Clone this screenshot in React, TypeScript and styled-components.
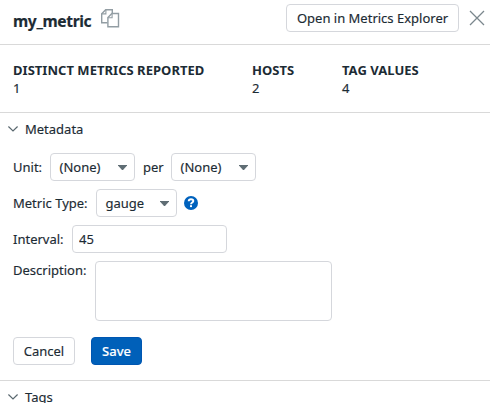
import React from 'react';
import styled, { createGlobalStyle, css } from 'styled-components';

const GlobalStyle = createGlobalStyle`
  *, *::before, *::after { box-sizing: border-box; }
  html, body { margin: 0; background: #fff; overflow: hidden; }
  body, button, input, textarea {
    font-family: 'Noto Sans', sans-serif;
    font-size: 13px;
    line-height: 18px;
    color: #1c2b34;
    -webkit-text-stroke: 0.15px currentColor;
  }
`;

const Panel = styled.main`
  display: flex;
  flex-direction: column;
  width: 490px;
  height: 403px;
  overflow: hidden;
  background: #fff;
`;

const Header = styled.header`
  display: flex;
  align-items: flex-start;
  height: 45px;
  flex: none;
  padding: 4px 5px 0 13px;
  border-bottom: 1px solid #d9d9d9;
`;

const Title = styled.h1`
  margin: 6px 9px 0 0;
  width: 79px;
  font-size: 15.6px;
  letter-spacing: -0.36px;
  line-height: 22px;
  font-weight: 700;
  white-space: nowrap;
`;

const IconButton = styled.button<{ $top: number }>`
  display: flex;
  margin: ${(p) => p.$top}px 0 0;
  padding: 0;
  border: 0;
  background: none;
`;

const box = css`
  border: 1px solid #d5d7dc;
  border-radius: 4px;
  background: #fff;
`;

const Button = styled.button<{ $width: number; $primary?: boolean }>`
  ${box}
  flex: none;
  width: ${(p) => p.$width}px;
  height: 28px;
  padding: 0;
  font-weight: 400;
  white-space: nowrap;
  ${(p) =>
    p.$primary &&
    css`
      color: #fff;
      font-weight: 500;
      background: #0060b9;
      border-color: #0056b1;
    `}
`;

const HeaderActions = styled.div`
  display: flex;
  gap: 10px;
  margin-left: auto;
`;

const Stats = styled.dl`
  display: grid;
  grid-template-columns: 239px 90px 1fr;
  flex: none;
  height: 68px;
  margin: 0;
  padding: 16px 0 0 13px;
  border-bottom: 1px solid #d9d9d9;
`;

const StatLabel = styled.dt`
  font-weight: 700;
  white-space: nowrap;
  -webkit-text-stroke: 0;
  letter-spacing: 0.03px;
`;

const StatValue = styled.dd`
  margin: 0;
`;

const Section = styled.section`
  flex: none;
  border-bottom: 1px solid #d9d9d9;
`;

const SectionTitle = styled.h2`
  display: flex;
  align-items: center;
  gap: 7px;
  height: 32px;
  margin: 0;
  padding-left: 8px;
  font-size: 13px;
  font-weight: 400;
`;

const Form = styled.form`
  display: flex;
  flex-direction: column;
  gap: 8px;
  padding: 8px 13px 15px;
`;

const Row = styled.div`
  display: flex;
  align-items: center;
`;

const TopRow = styled(Row)`
  align-items: flex-start;
`;

const Label = styled.label<{ $width: number }>`
  flex: none;
  width: ${(p) => p.$width}px;
  white-space: nowrap;
`;

const Select = styled.button<{ $width: number }>`
  ${box}
  display: flex;
  align-items: center;
  justify-content: space-between;
  width: ${(p) => p.$width}px;
  height: 28px;
  padding: 0 7.5px 0 8.5px;
`;

const Per = styled.span`
  width: 36px;
  padding-left: 8px;
`;

const Help = styled.span`
  display: flex;
  margin-left: 7px;
`;

const Input = styled.input`
  ${box}
  width: 155px;
  height: 28px;
  padding: 0 6px;
`;

const TextArea = styled.textarea`
  ${box}
  display: block;
  width: 237px;
  height: 60px;
  resize: none;
`;

const FormActions = styled.div`
  display: flex;
  gap: 16px;
  margin-top: 8px;
`;

const CopyIcon = () => (
  <svg width="19" height="19" viewBox="0 0 19 19" fill="none" stroke="#929da3" strokeWidth="1.4">
    <path d="M6.500 13.700H.7V4.700L4.700.7h6.600v3.800" />
    <path d="M4.900.7v4.200H.7" strokeWidth="1.100" />
    <path d="M10.900 4.500h6.600v13.200H6.900V8.500z" />
    <path d="M11.100 4.500v4.200H6.900" strokeWidth="1.100" />
  </svg>
);

const CloseIcon = () => (
  <svg width="16" height="16" viewBox="0 0 16 16" stroke="#7b878d" strokeWidth="1.3">
    <path d="M1 1l14 14M15 1L1 15" />
  </svg>
);

const Chevron = () => (
  <svg width="10" height="6" viewBox="0 0 10 6" fill="none" stroke="#5a686f" strokeWidth="1.2">
    <path d="M.4.5L5 5 9.600.5" />
  </svg>
);

const Caret = () => (
  <svg width="9" height="5" viewBox="0 0 9 5" fill="#5f6d74">
    <path d="M0 0h9v.5L5 5H4L0 .5z" />
  </svg>
);

const HelpIcon = () => (
  <svg width="14" height="14" viewBox="0 0 14 14" fill="none">
    <circle cx="7" cy="7" r="7" fill="#0062bd" />
    <path d="M4.7 5.200C4.800 3.800 5.700 3.200 7 3.200s2.300.7 2.300 1.800c0 1.500-2.300 1.500-2.300 3.300" stroke="#fff" strokeWidth="1.900" />
    <rect x="6" y="9.200" width="2" height="1.900" fill="#fff" />
  </svg>
);

const stats = [
  { label: 'DISTINCT METRICS REPORTED', value: 1 },
  { label: 'HOSTS', value: 2 },
  { label: 'TAG VALUES', value: 4 },
];

export default function App() {
  return (
    <Panel>
      <GlobalStyle />
      <Header>
        <Title>my_metric</Title>
        <IconButton $top={5} aria-label="Copy name"><CopyIcon /></IconButton>
        <HeaderActions>
          <Button $width={173}>Open in Metrics Explorer</Button>
          <IconButton $top={6} aria-label="Close"><CloseIcon /></IconButton>
        </HeaderActions>
      </Header>
      <Stats>
        {stats.map((s) => (
          <div key={s.label}>
            <StatLabel>{s.label}</StatLabel>
            <StatValue>{s.value}</StatValue>
          </div>
        ))}
      </Stats>
      <Section>
        <SectionTitle><Chevron />Metadata</SectionTitle>
        <Form onSubmit={(e) => e.preventDefault()}>
          <Row>
            <Label $width={37}>Unit:</Label>
            <Select type="button" $width={85}>(None)<Caret /></Select>
            <Per>per</Per>
            <Select type="button" $width={85}>(None)<Caret /></Select>
          </Row>
          <Row>
            <Label $width={83}>Metric Type:</Label>
            <Select type="button" $width={81}>gauge<Caret /></Select>
            <Help><HelpIcon /></Help>
          </Row>
          <Row>
            <Label $width={59} htmlFor="interval">Interval:</Label>
            <Input id="interval" defaultValue="45" />
          </Row>
          <TopRow>
            <Label $width={82} htmlFor="description">Description:</Label>
            <TextArea id="description" />
          </TopRow>
          <FormActions>
            <Button type="button" $width={62}>Cancel</Button>
            <Button type="submit" $width={51} $primary>Save</Button>
          </FormActions>
        </Form>
      </Section>
      <Section>
        <SectionTitle><Chevron />Tags</SectionTitle>
      </Section>
    </Panel>
  );
}
